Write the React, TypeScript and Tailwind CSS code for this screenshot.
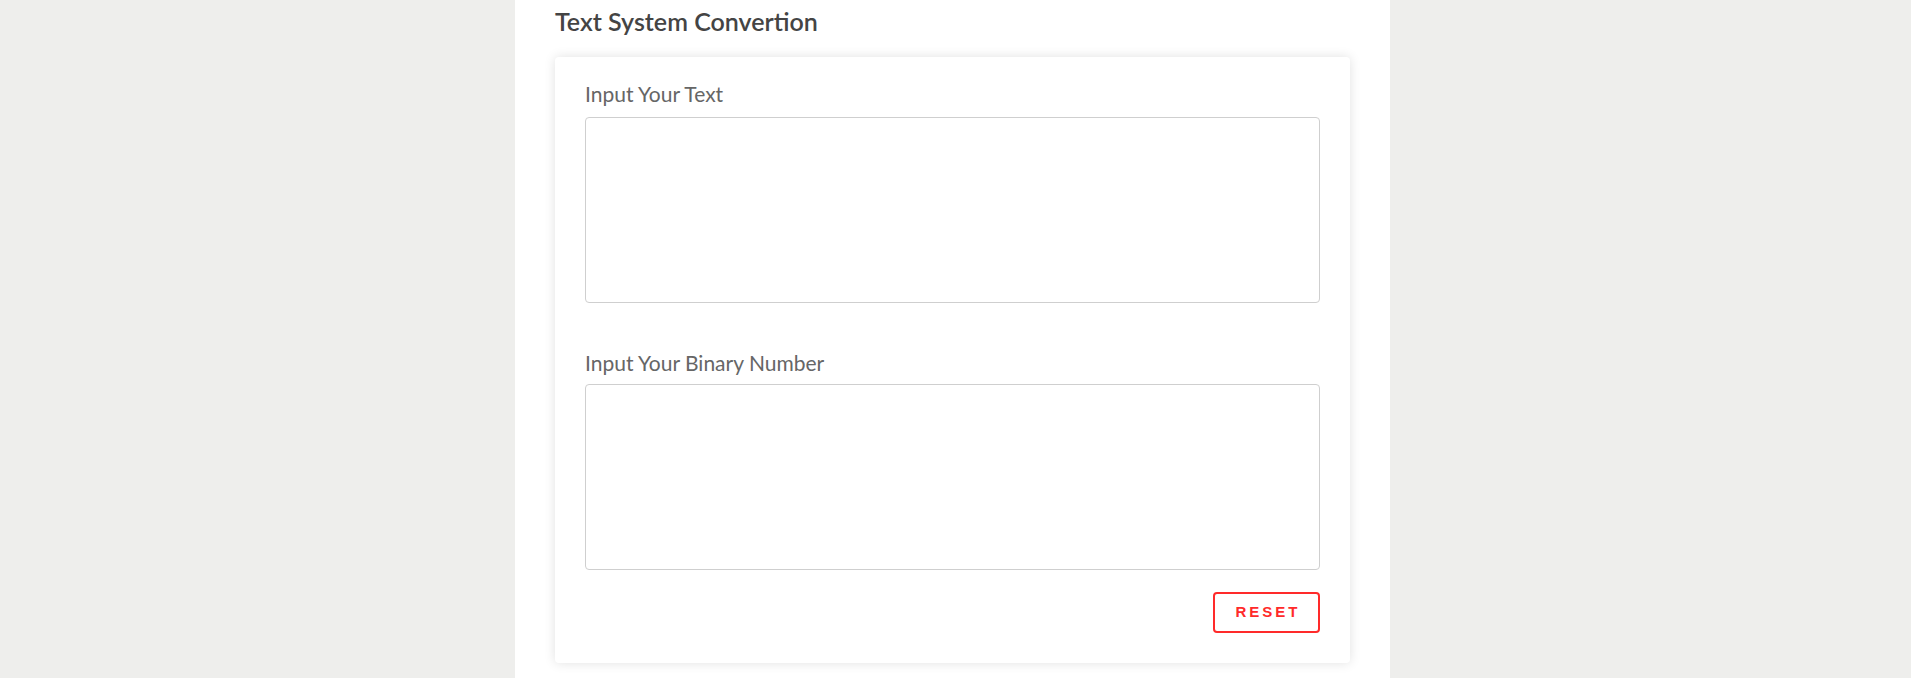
import { useState } from "react";

const App: React.FC = () => {
  const [text, setText] = useState("");
  const [binary, setBinary] = useState("");

  const handleReset = () => {
    setText("");
    setBinary("");
  };

  return (
    <div className="min-h-screen w-full overflow-hidden bg-[#eeeeec]" style={{ fontFamily: "Lato, 'Noto Sans', sans-serif" }}>
      <div className="ml-[515px] min-h-screen w-[875px] bg-white px-[40px] pt-[5px]">
        <h2 className="mb-[20px] text-[25px] leading-[32px] font-semibold text-[#444444]">
          Text System Convertion
        </h2>

        <div className="rounded-[4px] bg-white px-[30px] pt-[24px] pb-[30px] shadow-[0_0_12px_rgba(0,0,0,0.12)]">
          <label className="mb-[10px] block text-[21px] leading-[26px] text-[#666666]">Input Your Text</label>
          <textarea
            value={text}
            onChange={(e) => setText(e.target.value)}
            className="block h-[186px] w-full resize-none rounded-[4px] border border-[#cfcfcf] p-2 outline-none"
          />

          <label className="mt-[47px] mb-[8px] block text-[21px] leading-[26px] text-[#666666]">
            Input Your Binary Number
          </label>
          <textarea
            value={binary}
            onChange={(e) => setBinary(e.target.value)}
            className="block h-[186px] w-full resize-none rounded-[4px] border border-[#cfcfcf] p-2 outline-none"
          />

          <div className="mt-[22px] flex justify-end">
            <button
              onClick={handleReset}
              className="flex h-[41px] w-[107px] items-center justify-center rounded-[4px] border-2 border-[#ff2a2a] bg-white pl-[3px] text-[15px] font-bold tracking-[3px] text-[#ff2a2a]"
              style={{ fontFamily: "'Liberation Sans', Arial, sans-serif" }}
            >
              RESET
            </button>
          </div>
        </div>
      </div>
    </div>
  );
};

export default App;
